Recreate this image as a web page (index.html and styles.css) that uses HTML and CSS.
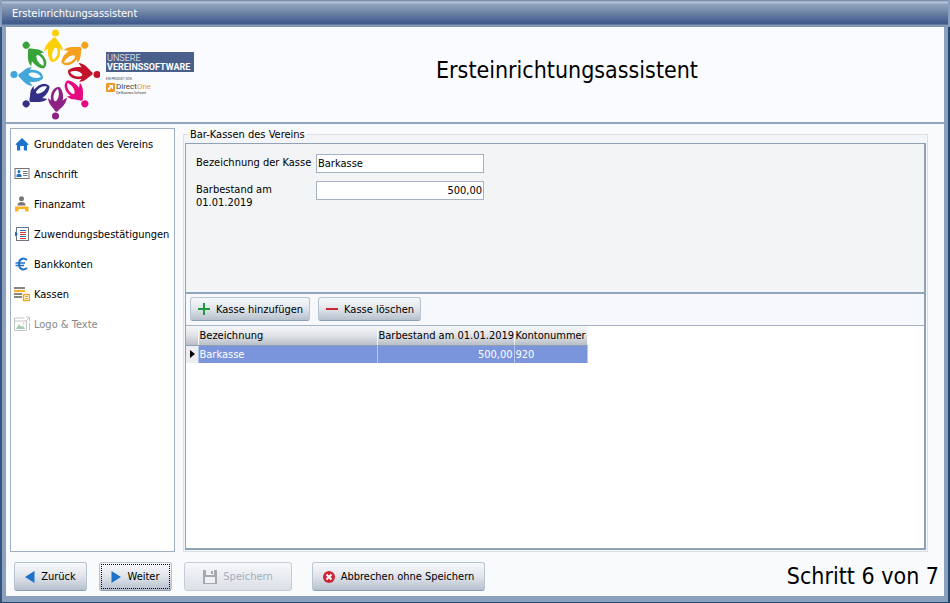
FILE: index.html
```
<!DOCTYPE html>
<html lang="de">
<head>
    <meta charset="UTF-8">
    <meta name="viewport" content="width=device-width, initial-scale=1.0">
    <title>Ersteinrichtungsassistent</title>
    <link rel="stylesheet" href="styles.css">
</head>
<body>
    <div class="window">
        <div class="titlebar">Ersteinrichtungsassistent</div>

        <header class="header">
            <div class="brand">
                <svg class="logo" width="90" height="92" viewBox="9 28 90 92">
                    <defs>
                        <g id="person">
                            <circle cx="54.500" cy="33" r="3.500"/>
                            <path d="M52.500 37.500C50 41 44 43.500 43 51.500L47.200 48.500C46.300 54 47.500 59 50.500 62C56 62.500 60 57 59 48.500L61.800 51C62 44.500 56.500 41.500 55 38Q53.700 36.800 52.500 37.500Z"/>
                            <path class="logo-gap" d="M53 49C50.800 52 50.500 56.500 52 60C55.500 58 57.500 53.500 56 48.500C55 47.300 53.900 47.600 53 49Z"/>
                        </g>
                    </defs>
                    <use href="#person" fill="#fdd006"/>
                    <use href="#person" fill="#f6a11c" transform="rotate(45 54.500 74.500)"/>
                    <use href="#person" fill="#c3132b" transform="rotate(90 54.500 74.500)"/>
                    <use href="#person" fill="#e5097f" transform="rotate(135 54.500 74.500)"/>
                    <use href="#person" fill="#8d2184" transform="rotate(180 54.500 74.500)"/>
                    <use href="#person" fill="#342f86" transform="rotate(225 54.500 74.500)"/>
                    <use href="#person" fill="#41a6da" transform="rotate(270 54.500 74.500)"/>
                    <use href="#person" fill="#37a338" transform="rotate(315 54.500 74.500)"/>
                </svg>
                <div class="brand-text">
                    <div class="brand-name"><span>UNSERE</span><b>VEREINSSOFTWARE</b></div>
                    <div class="brand-note">EIN PRODUKT VON</div>
                    <div class="partner">
                        <svg width="9" height="9" viewBox="0 0 9 9"><rect width="9" height="9" rx="1" fill="#ee9a25"/><path d="M2 7V5l3-2H3V2h4v4H6V4L3 7Z" fill="#fff"/></svg>
                        <div class="partner-name">Direct<span>One</span><small>Die Business Software</small></div>
                    </div>
                </div>
            </div>
            <h1>Ersteinrichtungsassistent</h1>
        </header>

        <div class="content">
            <nav class="steps">
                <a href="#grunddaten">
                    <svg width="16" height="16" viewBox="0 0 16 16"><path d="M8 2l6.500 6.300-1 1L13 9v5.500H9.800V10H6.200v4.500H3V9l-.5.300-1-1Z" fill="#1c72c9"/></svg>
                    Grunddaten des Vereins
                </a>
                <a href="#anschrift">
                    <svg width="16" height="16" viewBox="0 0 16 16"><rect x="1" y="2.500" width="14" height="10" fill="#fff" stroke="#6f7680"/><circle cx="5" cy="5.500" r="1.500" fill="#1c72c9"/><path d="M2.500 11V9q2.500-3 5 0v2Z" fill="#1c72c9"/><path d="M9 5.500h4.500M9 7.500h4.500M9 9.500h4.500" stroke="#6f7680"/></svg>
                    Anschrift
                </a>
                <a href="#finanzamt">
                    <svg width="16" height="16" viewBox="0 0 16 16"><circle cx="7.500" cy="2.800" r="2.500" fill="#787878"/><path d="M3.500 9.500V8q1-2 4-2t4 2v1.500Z" fill="#787878"/><path d="M1 10.500h13.500V15.500H11V13H4.500v2.500H1Z" fill="#fbb124"/></svg>
                    Finanzamt
                </a>
                <a href="#zuwendungen">
                    <svg width="16" height="16" viewBox="0 0 16 16"><rect x="2.500" y="1.500" width="12" height="13" fill="#fff" stroke="#6f7680"/><path d="M6 4.500h6M6 10.500h6" stroke="#1c72c9"/><path d="M6 6.500h6M6 8.500h6M6 12.500h6" stroke="#d23b42"/><path d="M1 5.500l3 2.500-3 2.500Z" fill="#1c72c9"/></svg>
                    Zuwendungsbestätigungen
                </a>
                <a href="#bankkonten">
                    <svg width="16" height="16" viewBox="0 0 16 16" fill="none" stroke="#1c72c9"><path d="M13 4C9 1 5 3 5 8s4 7 8 4" stroke-width="2"/><path d="M1.500 7H11M1.500 9.500H10" stroke-width="1.500"/></svg>
                    Bankkonten
                </a>
                <a href="#kassen">
                    <svg width="16" height="16" viewBox="0 0 16 16"><path d="M0 2h11M0 8h8M0 11h8" stroke="#86867f" stroke-width="2"/><path d="M0 5h11" stroke="#fbb124" stroke-width="2"/><path d="M9.500 8.500h6v6h-6Z" fill="#fff" stroke="#f2a51e" stroke-width="1.500"/><path d="M11 10.500h3M11 12.500h3" stroke="#f2a51e"/></svg>
                    Kassen
                </a>
                <a href="#logo" class="disabled">
                    <svg width="16" height="16" viewBox="0 0 16 16"><path d="M.5 4V2h10M.5 4v10.500h12V5H.5" fill="none" stroke="#b4b8bb"/><path d="M2 13l3-5 2.500 3L9 9.500l2 3.500Z" fill="#8cc3a1"/><circle cx="9.500" cy="7.500" r="1" fill="#e5bf80"/><path d="M12 1h3.500v4M15 2l-3 3M15.500 7v7" fill="none" stroke="#b4b8bb"/></svg>
                    Logo &amp; Texte
                </a>
            </nav>

            <fieldset class="group">
                <legend>Bar-Kassen des Vereins</legend>
                <div class="panel">
                    <form class="form">
                        <label for="bezeichnung">Bezeichnung der Kasse</label>
                        <input id="bezeichnung" type="text" value="Barkasse">
                        <label for="barbestand">Barbestand am 01.01.2019</label>
                        <input id="barbestand" class="number" type="text" value="500,00">
                    </form>
                    <div class="toolbar">
                        <button type="button" class="btn small">
                            <svg width="14" height="14" viewBox="0 0 14 14"><path d="M7 1v12M1 7h12" stroke="#1d9a3c" stroke-width="2"/></svg>
                            Kasse hinzufügen
                        </button>
                        <button type="button" class="btn small">
                            <svg width="14" height="14" viewBox="0 0 14 14"><path d="M1 7h12" stroke="#cc2630" stroke-width="2"/></svg>
                            Kasse löschen
                        </button>
                    </div>
                    <div class="grid">
                        <table>
                            <thead>
                                <tr>
                                    <th class="marker"></th>
                                    <th class="col-name">Bezeichnung</th>
                                    <th class="col-amount">Barbestand am 01.01.2019</th>
                                    <th class="col-account">Kontonummer</th>
                                </tr>
                            </thead>
                            <tbody>
                                <tr>
                                    <td class="marker"><svg width="5" height="8" viewBox="0 0 5 8"><path d="M0 0l5 4-5 4Z"/></svg></td>
                                    <td>Barkasse</td>
                                    <td class="number">500,00</td>
                                    <td>920</td>
                                </tr>
                            </tbody>
                        </table>
                    </div>
                </div>
            </fieldset>
        </div>

        <footer class="footer">
            <button type="button" class="btn back">
                <svg width="10" height="12" viewBox="0 0 10 12"><path d="M9.500 0v12L0 6Z" fill="#1c72c9"/></svg>
                Zurück
            </button>
            <button type="button" class="btn next focused">
                <svg width="10" height="12" viewBox="0 0 10 12"><path d="M.5 0v12L10 6Z" fill="#1c72c9"/></svg>
                Weiter
            </button>
            <button type="button" class="btn save" disabled>
                <svg width="14" height="14" viewBox="0 0 14 14"><path d="M0 0h14v14H0Z" fill="#a5a9ae"/><path d="M3 0h8v5H3ZM2 7h10v6H2Z" fill="#f0f1f4"/><path d="M8 1h2v3H8Z" fill="#a5a9ae"/></svg>
                Speichern
            </button>
            <button type="button" class="btn cancel">
                <svg width="12" height="12" viewBox="0 0 12 12"><circle cx="6" cy="6" r="6" fill="#cd2438"/><path d="M3.500 3.500l5 5M8.500 3.500l-5 5" stroke="#fff" stroke-width="2"/></svg>
                Abbrechen ohne Speichern
            </button>
            <div class="step-info">Schritt 6 von 7</div>
        </footer>
    </div>
</body>
</html>
```
FILE: styles.css
```
* { box-sizing: border-box; }
body { margin: 0; font-family: Tahoma, "DejaVu Sans Condensed", "DejaVu Sans", sans-serif; font-size: 11px; line-height: 13px; color: #000; }
button, input { font: inherit; color: inherit; }
svg { flex: none; }

.window { display: flex; flex-direction: column; min-height: 100vh; padding: 0 6px 6px 6px; background-color: #8ba1bd; border-bottom: 1px solid #1f4777; box-shadow: inset 2px 0 #36537f, inset -2px 0 #24466f; }
.titlebar { height: 27px; margin: 0 -6px; padding: 7px 10px; color: #fff; background: linear-gradient(#7d90ac 0, #7d90ac 1px, #c3cfdf 2px, #91a4bf 4px, #7187a8 12px, #435e8e 22px, #3f5a8b 24px, #8298b5 25px); border-left: 2px solid #8a9fbd; border-right: 2px solid #8a9fbd; }

.header { display: flex; height: 97px; background-color: #f9fbfe; border-bottom: 2px solid #8fa5bb; }
.brand { display: flex; width: 190px; padding: 1px 0 0 4px; }
.logo-gap { fill: #f9fbfe; }
.brand-text { padding: 24px 0 0 6px; font-family: Roboto, sans-serif; }
.brand-name { width: 88px; height: 20px; padding: 2px 0 0 1px; color: #fff; background-color: #4a5f8c; font-size: 9px; line-height: 9px; }
.brand-name span, .brand-name b { display: block; }
.brand-name span { font-weight: 300; }
.brand-note { margin-top: 5px; font-size: 3px; line-height: 4px; color: #444; }
.partner { display: flex; gap: 1px; margin-top: 2px; }
.partner-name { font-size: 8px; line-height: 8px; color: #444; }
.partner-name span { color: #ee9a25; }
.partner-name small { display: block; font-size: 3px; line-height: 4px; }
.header h1 { flex: 1; margin: 0; padding: 28px 6px 0 0; text-align: center; font-size: 23px; line-height: 30px; font-weight: normal; }

.content { display: flex; flex: 1; gap: 8px; padding: 4px 16px 0 4px; background-color: #f9fafc; }
.steps { width: 165px; border: 1px solid #9db0c4; background-color: #fff; }
.steps a { display: flex; align-items: center; gap: 4px; height: 30px; padding-left: 3px; color: #000; text-decoration: none; white-space: nowrap; }
.steps .disabled { color: #85888c; }
.steps .disabled svg { opacity: .8; }

.group { display: flex; flex: 1; min-width: 0; margin: 0; padding: 2px 1px 1px; border: 1px solid #dcdfe3; background-color: #f3f5f8; }
.group legend { margin-left: 3px; padding: 0 2px; }
.panel { display: flex; flex: 1; flex-direction: column; border: 1px solid #8fa3b8; border-right-width: 2px; border-bottom-width: 2px; }
.form { display: grid; grid-template-columns: 112px 168px; gap: 8px; align-content: start; height: 150px; padding: 10px; border-bottom: 2px solid #8fa5bb; background-color: #f2f4f6; }
.form label { padding-top: 2px; white-space: nowrap; }
.form label[for="barbestand"] { width: 80px; white-space: normal; }
.form input { height: 19px; width: 100%; padding: 0 1px; border: 1px solid #a3b3c4; background-color: #fff; }
.number { text-align: right; }
.toolbar { display: flex; gap: 8px; padding: 3px 4px; height: 31px; background-color: #f7f8fb; }

.btn { display: flex; align-items: center; justify-content: center; gap: 6px; padding: 0 7px; border: 1px solid #b7c4d2; border-bottom-color: #8da0b8; border-radius: 3px; background: linear-gradient(#f8f9fb, #e0e4ea 50%, #b6c0ce); white-space: nowrap; }
.btn.small { height: 24px; gap: 5px; padding: 0 6px; }

.grid { flex: 1; background-color: #fff; border-top: 1px solid #a3b3c4; }
table { border-collapse: collapse; table-layout: fixed; width: 402px; }
th, td { height: 18px; padding: 0 1px; white-space: nowrap; }
th { height: 19px; text-align: left; font-weight: normal; background: linear-gradient(#f6f7f9, #dfe2e6 50%, #b9bec7); border-right: 1px solid #f4f6f8; border-bottom: 1px solid #8fa0b2; }
td { color: #fff; background-color: #7b95dd; border-right: 1px solid #b9c6ec; }
.marker { width: 12px; }
td.marker { padding: 0 4px; background: #eceef1; }
.marker svg { display: block; }
.col-name { width: 179px; }
.col-amount { width: 137px; }

.footer { display: flex; align-items: flex-start; padding: 10px 5px 0 8px; height: 44px; background-color: #f9fafc; }
.footer .btn { height: 29px; padding: 0; }
.back { width: 73px; }
.btn.next { width: 73px; margin-left: 12px; }
.btn.save { width: 108px; margin-left: 12px; color: #a3adbd; background: linear-gradient(#f6f8fa, #e6e9ee 60%, #dbe0e8); border-color: #c3ccd8; }
.btn.cancel { width: 173px; margin-left: 20px; }
.btn.focused { outline: 1px dotted #000; outline-offset: -3px; }
.step-info { margin-left: auto; font-size: 23px; line-height: 28px; white-space: nowrap; }
```
